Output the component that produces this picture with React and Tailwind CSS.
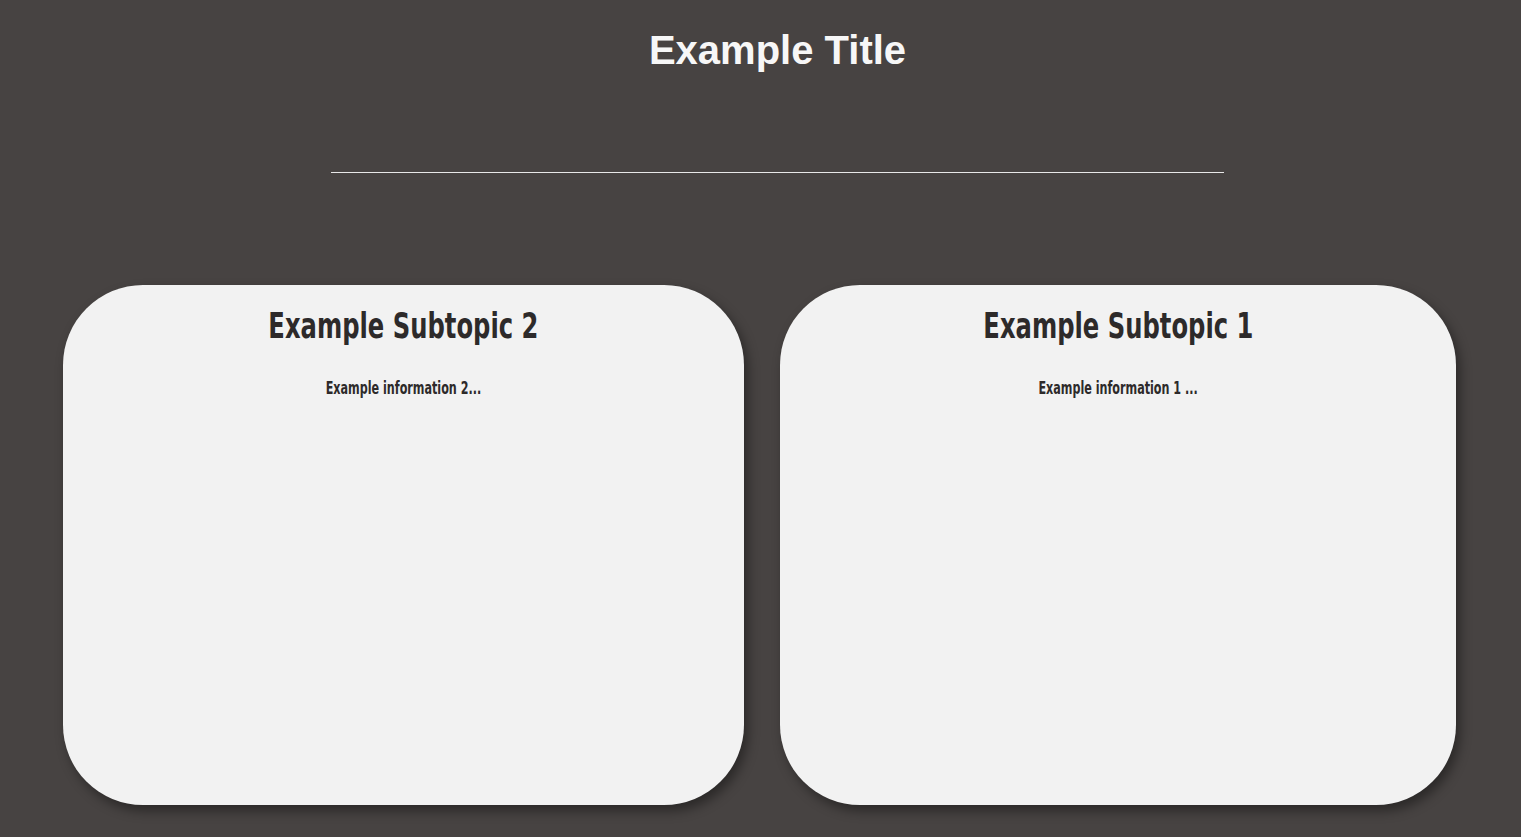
export default function App() {
  const impact = { fontFamily: '"DejaVu Sans Condensed", "DejaVu Sans", sans-serif' };
  return (
    <div className="min-h-screen h-[837px] overflow-hidden bg-[#474342]">
      <div className="pt-[27px] pl-[34px] text-center">
        <h1
          className="text-[40px] leading-[46px] font-bold text-[#f7f7f7]"
          style={{ fontFamily: '"Liberation Sans", Arial, sans-serif' }}
        >
          Example Title
        </h1>
      </div>
      <div className="mt-[99px] ml-[331px] w-[893px] h-px bg-[#e8e8e8]" />
      <div className="mt-[112px] pl-[63px] flex gap-[36px]">
        {[
          { w: "w-[681px]", title: "Example Subtopic 2", info: "Example information 2..." },
          { w: "w-[676px]", title: "Example Subtopic 1", info: "Example information 1 ..." },
        ].map((c) => (
          <div
            key={c.title}
            className={`${c.w} h-[520px] rounded-[80px] bg-[#f2f2f2] shadow-[4px_6px_12px_rgba(0,0,0,0.4)] pt-[21px] text-center text-[#2d2a2a]`}
          >
            <h2 className="text-[35px] leading-[40px] font-bold" style={impact}>
              <span className="inline-block whitespace-nowrap scale-x-[0.77] origin-center">{c.title}</span>
            </h2>
            <p className="mt-[32px] text-[17px] leading-[20px] font-bold" style={impact}>
              <span className="inline-block whitespace-nowrap scale-x-[0.73] origin-center">{c.info}</span>
            </p>
          </div>
        ))}
      </div>
    </div>
  );
}
